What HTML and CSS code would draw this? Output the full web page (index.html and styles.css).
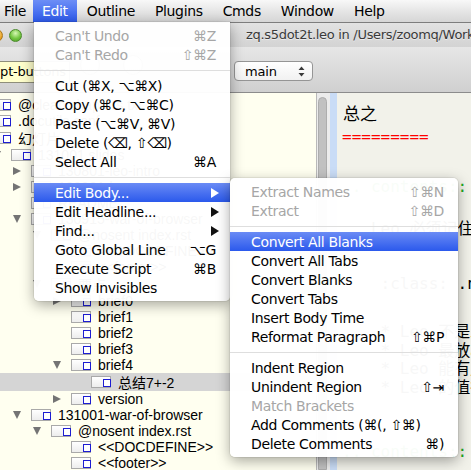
FILE: index.html
```html
<!DOCTYPE html>
<html>
<head>
<meta charset="utf-8">
<link rel="stylesheet" href="styles.css">
</head>
<body>
<div class="menubar">
  <div class="mi first">File</div>
  <div class="mi active">Edit</div>
  <div class="mi">Outline</div>
  <div class="mi">Plugins</div>
  <div class="mi">Cmds</div>
  <div class="mi">Window</div>
  <div class="mi">Help</div>
</div>
<div class="titlebar">
  <div class="lights"><span class="light red"></span><span class="light yellow"></span><span class="light green"></span></div>
  <div class="title">zq.s5dot2t.leo in /Users/zoomq/Workspace/leo</div>
</div>
<div class="toolbar">
  <div class="field">script-buttons</div>
  <div class="tbtn b1"></div>
  <div class="tbtn b2"></div>
  <div class="popup"><span>main</span>
    <svg class="updown" width="7" height="11" viewBox="0 0 7 11"><path d="M3.5 0.5 L6.5 4 L0.5 4 Z M0.5 7 L6.5 7 L3.5 10.5 Z" fill="#3a3a3a"/></svg>
  </div>
</div>
<div class="panes">
  <div class="outline">
    <div class="row lvm1"><span class="tw"></span><span class="nd"></span><span class="lb">@clean chapters.txt</span></div>
    <div class="row lvm1"><span class="tw"></span><span class="nd"></span><span class="lb">.docutils.conf</span></div>
    <div class="row lvm1 cjk"><span class="tw"></span><span class="nd"></span><span class="lb">幻灯片</span></div>
    <div class="row lv0"><span class="tw open"></span><span class="nd"></span><span class="lb">131001 slides</span></div>
    <div class="row lv1"><span class="tw closed"></span><span class="nd"></span><span class="lb">130801-leo-intro</span></div>
    <div class="row lv1"><span class="tw closed"></span><span class="nd"></span><span class="lb">130901-leo-usage</span></div>
    <div class="row lv1"><span class="tw"></span><span class="nd"></span><span class="lb">README</span></div>
    <div class="row lv1"><span class="tw open"></span><span class="nd"></span><span class="lb">130915-war-of-browser</span></div>
    <div class="row lv2"><span class="tw open"></span><span class="nd"></span><span class="lb">@nosent index.rst</span></div>
    <div class="row lv3"><span class="tw"></span><span class="nd"></span><span class="lb">&lt;&lt;DOCDEFINE&gt;&gt;</span></div>
    <div class="row lv3"><span class="tw"></span><span class="nd"></span><span class="lb">&lt;&lt;footer&gt;&gt;</span></div>
    <div class="row lv2 cjk"><span class="tw open"></span><span class="nd"></span><span class="lb">要点</span></div>
    <div class="row lv3"><span class="tw closed"></span><span class="nd"></span><span class="lb">brief0</span></div>
    <div class="row lv3"><span class="tw"></span><span class="nd"></span><span class="lb">brief1</span></div>
    <div class="row lv3"><span class="tw"></span><span class="nd"></span><span class="lb">brief2</span></div>
    <div class="row lv3"><span class="tw"></span><span class="nd"></span><span class="lb">brief3</span></div>
    <div class="row lv3"><span class="tw open"></span><span class="nd"></span><span class="lb">brief4</span></div>
    <div class="row lv4 cjk sel"><span class="tw"></span><span class="nd"></span><span class="lb">总结7+-2</span></div>
    <div class="row lv3"><span class="tw closed"></span><span class="nd"></span><span class="lb">version</span></div>
    <div class="row lv1"><span class="tw open"></span><span class="nd"></span><span class="lb">131001-war-of-browser</span></div>
    <div class="row lv2"><span class="tw open"></span><span class="nd"></span><span class="lb">@nosent index.rst</span></div>
    <div class="row lv3"><span class="tw"></span><span class="nd"></span><span class="lb">&lt;&lt;DOCDEFINE&gt;&gt;</span></div>
    <div class="row lv3"><span class="tw"></span><span class="nd"></span><span class="lb">&lt;&lt;footer&gt;&gt;</span></div>
  </div>
  <div class="vscroll"><div class="thumb"></div></div>
  <div class="gutter"></div>
  <div class="body">
    <div class="ln head">总之</div>
    <div class="ln rule">=========</div>
    <div class="ln dir mt28">.. contents::</div>
    <div class="ln mt23">   Leo 必须记住</div>
    <div class="ln mt36">    :class: .note</div>
    <div class="ln li mt30">    * Leo 不是工具</div>
    <div class="ln li">    * Leo 最放心</div>
    <div class="ln li">    * Leo 能有用</div>
    <div class="ln li">    * Leo 的值得</div>
    <div class="ln dir mt44">.. contents::</div>
  </div>
</div>

<div class="menu main-menu">
  <div class="item dis"><span>Can't Undo</span><span class="key">⌘Z</span></div>
  <div class="item dis"><span>Can't Redo</span><span class="key">⇧⌘Z</span></div>
  <div class="sep"></div>
  <div class="item"><span>Cut (⌘X, ⌥⌘X)</span></div>
  <div class="item"><span>Copy (⌘C, ⌥⌘C)</span></div>
  <div class="item"><span>Paste (⌥⌘V, ⌘V)</span></div>
  <div class="item"><span>Delete (⌫, ⇧⌫)</span></div>
  <div class="item"><span>Select All</span><span class="key">⌘A</span></div>
  <div class="sep"></div>
  <div class="item hl"><span>Edit Body...</span><span class="arrow"></span></div>
  <div class="item"><span>Edit Headline...</span><span class="arrow"></span></div>
  <div class="item"><span>Find...</span><span class="arrow"></span></div>
  <div class="item"><span>Goto Global Line</span><span class="key">⌥G</span></div>
  <div class="item"><span>Execute Script</span><span class="key">⌘B</span></div>
  <div class="item"><span>Show Invisibles</span></div>
</div>

<div class="menu sub-menu">
  <div class="item dis"><span>Extract Names</span><span class="key">⇧⌘N</span></div>
  <div class="item dis"><span>Extract</span><span class="key">⇧⌘D</span></div>
  <div class="sep"></div>
  <div class="item hl"><span>Convert All Blanks</span></div>
  <div class="item"><span>Convert All Tabs</span></div>
  <div class="item"><span>Convert Blanks</span></div>
  <div class="item"><span>Convert Tabs</span></div>
  <div class="item"><span>Insert Body Time</span></div>
  <div class="item"><span>Reformat Paragraph</span><span class="key">⇧⌘P</span></div>
  <div class="sep"></div>
  <div class="item"><span>Indent Region</span></div>
  <div class="item"><span>Unindent Region</span><span class="key">⇧⇥</span></div>
  <div class="item dis"><span>Match Brackets</span></div>
  <div class="item"><span>Add Comments (⌘(, ⇧⌘)</span></div>
  <div class="item"><span>Delete Comments</span><span class="key">⌘)</span></div>
</div>
</body>
</html>
```
FILE: styles.css
```css
* { box-sizing: border-box; margin: 0; padding: 0; }
html, body { width: 471px; height: 470px; overflow: hidden; }
body {
  position: relative;
  font-family: "DejaVu Sans", "Noto Sans CJK SC", sans-serif;
  background: #f2f2ea;
  color: #000;
}

/* menu bar */
.menubar {
  display: flex;
  height: 23px;
  padding-left: 4px;
  background: linear-gradient(#f8f8f8, #e4e4e4 55%, #d6d6d6);
  border-bottom: 1px solid #7d7d7d;
  font-size: 14px;
  letter-spacing: -0.35px;
}
.mi { display: flex; align-items: center; padding: 0 10px 1px; }
.mi.first { padding-left: 0; padding-right: 7px; }
.mi.active {
  padding: 0 9px 1px;
  color: #fff;
  background: linear-gradient(#6d8ef6, #2d5aec);
}

/* title bar */
.titlebar {
  display: flex;
  align-items: center;
  height: 24px;
  background: linear-gradient(#e2e2e2, #d3d3d3);
}
.lights { display: flex; gap: 6px; margin-left: -29px; margin-top: 1px; }
.light { width: 13px; height: 13px; border-radius: 50%; }
.light.red { background: radial-gradient(circle at 50% 35%, #ff9c95, #d8352c 70%); border: 1px solid #a2332c; }
.light.yellow { background: radial-gradient(circle at 50% 35%, #ffe59a, #e69c1c 70%); border: 1px solid #a9761e; }
.light.green { background: radial-gradient(circle at 50% 30%, #d6f7b4, #74c742 55%, #4a9a24); border: 1px solid #4b8a2c; }
.title {
  margin-left: 224px;
  font-size: 13px;
  letter-spacing: -0.3px;
  color: #3a3a3a;
  white-space: nowrap;
  text-shadow: 0 1px 0 rgba(255,255,255,.5);
  padding-bottom: 2px;
}

/* toolbar */
.toolbar {
  display: flex;
  align-items: flex-start;
  height: 46px;
  background: linear-gradient(#e6e6e6, #d0d0d0);
  border-bottom: 1px solid #8c8c8c;
  white-space: nowrap;
}
.field {
  flex: none;
  width: 97px;
  height: 22px;
  margin-top: 14px;
  margin-left: -27px;
  padding-left: 4px;
  background: #ffffcc;
  border: 1px solid #8e8e7a;
  font-size: 13px;
  line-height: 20px;
  letter-spacing: -0.2px;
  overflow: hidden;
}
.tbtn {
  flex: none;
  width: 20px;
  height: 20px;
  margin-top: 8px;
  border-radius: 50%;
  border: 1px solid #8a8a8a;
  background: linear-gradient(#fafafa, #dcdcdc);
}
.b1 { margin-left: 10px; }
.b2 { margin-left: 23px; }
.popup {
  flex: none;
  display: flex;
  align-items: center;
  justify-content: space-between;
  width: 79px;
  height: 20px;
  margin-top: 14px;
  margin-left: 91px;
  padding: 0 7px 0 10px;
  border: 1px solid #959595;
  border-radius: 4px;
  background: linear-gradient(#ffffff, #f1f1f1);
  font-size: 13px;
  letter-spacing: -0.2px;
}

/* panes */
.panes { display: flex; height: 377px; }
.outline {
  flex: none;
  width: 316px;
  background: #fffff0;
  padding-top: 4px;
  font-family: "Liberation Sans", "Noto Sans CJK SC", sans-serif;
  font-size: 14px;
  overflow: hidden;
}
.row { display: flex; align-items: center; height: 16px; white-space: nowrap; }
.row.cjk { height: 18px; }
.row.sel { background: #d5d5d5; }
.lvm1 { --lv: -1; }
.lv0 { --lv: 0; }
.lv1 { --lv: 1; }
.lv2 { --lv: 2; }
.lv3 { --lv: 3; }
.lv4 { --lv: 4; }
.tw {
  flex: none;
  display: flex;
  align-items: center;
  width: 18px;
  height: 10px;
  margin-left: calc(var(--lv) * 20px - 7px);
}
.tw.closed::before {
  content: "";
  border-left: 8px solid #747474;
  border-top: 4.5px solid transparent;
  border-bottom: 4.5px solid transparent;
}
.tw.open::before {
  content: "";
  border-top: 8px solid #747474;
  border-left: 4.5px solid transparent;
  border-right: 4.5px solid transparent;
}
.nd {
  flex: none;
  position: relative;
  width: 20px;
  height: 12px;
  border: 1px solid #a9a9a9;
  background: linear-gradient(#ffffff, #ededed);
}
.nd::after {
  content: "";
  position: absolute;
  left: 11px;
  top: 2px;
  width: 6px;
  height: 6px;
  border: 1px solid #1d1dd2;
  background: #fff;
}
.lb { margin-left: 7px; }

.vscroll {
  flex: none;
  width: 14px;
  padding: 4px 3px 0 1px;
  background: #ececec;
  border-left: 1px solid #b9b9b9;
}
.thumb {
  height: 100%;
  background: #c1c1c1;
  border: 1px solid #adadad;
  border-radius: 5px 5px 0 0;
}
.gutter { flex: none; width: 7px; background: #c9dcf6; }

.body {
  flex: 1;
  min-width: 0;
  padding: 8px 0 0 5px;
  background: #f2f2ea;
  font-family: "DejaVu Sans Mono", "Noto Sans CJK SC", monospace;
  font-size: 16px;
  overflow: hidden;
}
.ln { height: 19px; line-height: 19px; white-space: pre; }
.ln.head { height: 24px; line-height: 24px; font-family: "Noto Sans CJK SC", sans-serif; font-size: 17px; padding-left: 1px; }
.ln.rule { height: 24px; line-height: 24px; color: #f00; }
.ln.dir { color: #20a820; }
.ln.li { height: 18.7px; line-height: 18.7px; }
.mt23 { margin-top: 23px; }
.mt28 { margin-top: 28px; }
.mt30 { margin-top: 30px; }
.mt36 { margin-top: 36px; }
.mt44 { margin-top: 44px; }

/* menus */
.menu {
  position: absolute;
  padding: 4px 0;
  background: rgba(255, 255, 255, 0.97);
  box-shadow: 0 4px 14px rgba(0, 0, 0, 0.35), 0 0 0 1px rgba(0, 0, 0, 0.06);
  font-size: 14px;
  letter-spacing: -0.35px;
}
.main-menu { left: 34px; top: 22px; width: 196px; border-radius: 0 0 5px 5px; }
.sub-menu { left: 230px; top: 178px; width: 228px; border-radius: 5px; }
.item {
  display: flex;
  align-items: center;
  justify-content: space-between;
  height: 19px;
  padding: 0 14px 0 21px;
  white-space: nowrap;
}
.item.dis { color: #a6a6a6; }
.item.hl { color: #fff; background: linear-gradient(#6a8bf5, #2b59ec); }
.sep { display: flex; align-items: center; height: 12px; }
.sep::before { content: ""; flex: 1; height: 1px; background: #dedede; }
.arrow {
  width: 0;
  height: 0;
  margin-right: -3px;
  border-left: 8px solid #111;
  border-top: 5px solid transparent;
  border-bottom: 5px solid transparent;
}
.item.hl .arrow { border-left-color: #fff; }
```
